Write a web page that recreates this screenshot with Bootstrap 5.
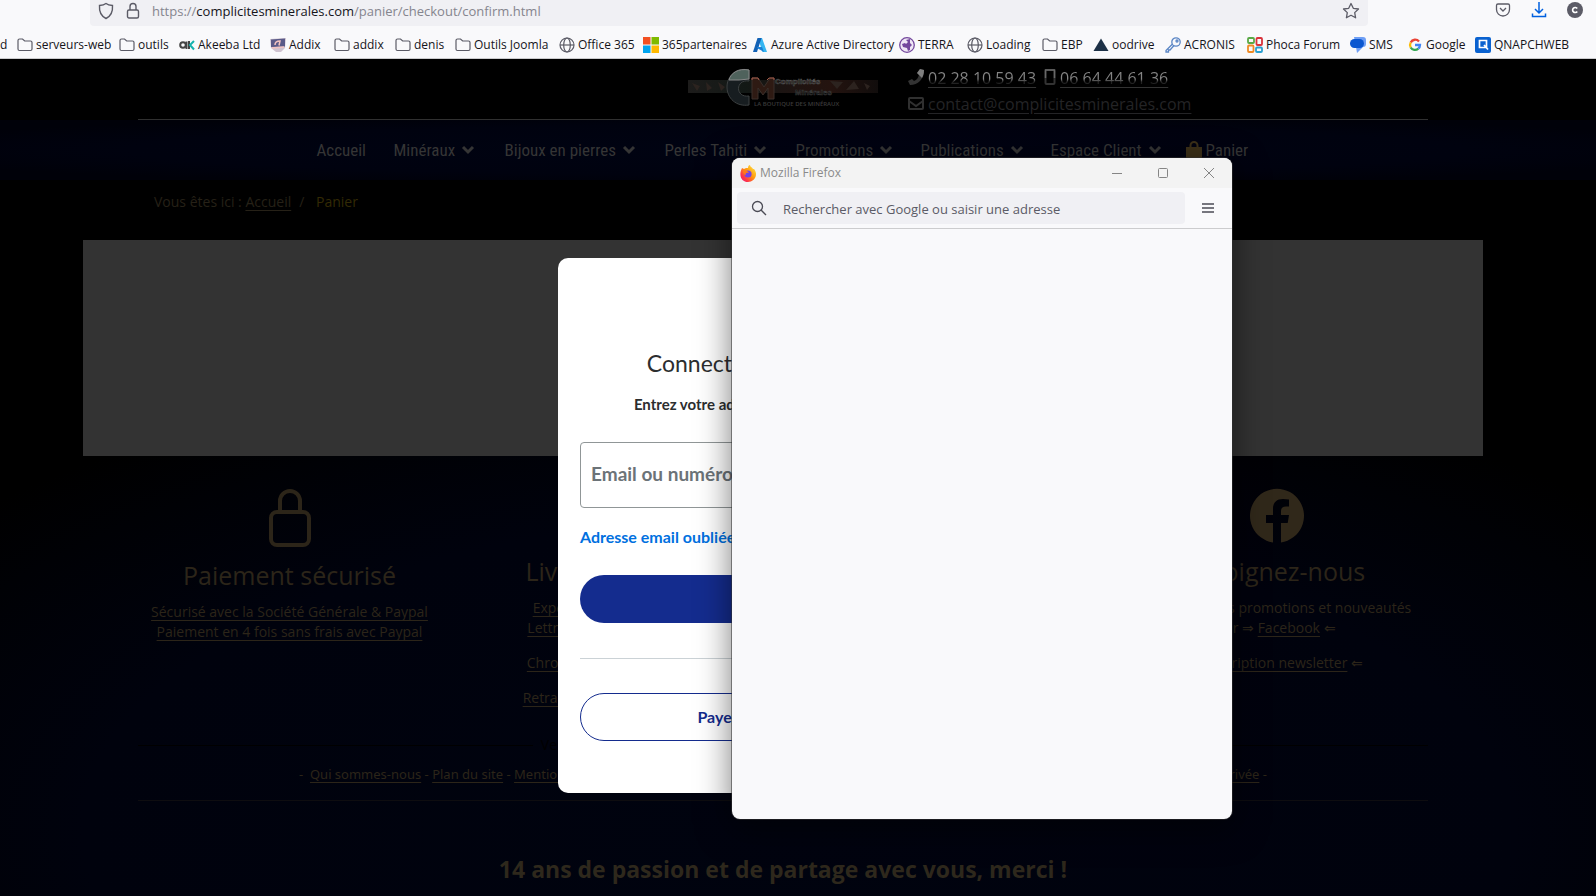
<!DOCTYPE html>
<html lang="fr">
<head>
<meta charset="utf-8">
<meta name="viewport" content="width=device-width, initial-scale=1">
<title>Complicités Minérales - Panier</title>
<link rel="stylesheet" href="https://cdn.jsdelivr.net/npm/bootstrap@5.3.0/dist/css/bootstrap.min.css">
<style>
  :root { --ink: #2c2519; --grey: #303030; }
  body { background: #000; color: var(--ink); font: 14px/20px "Open Sans", "Noto Sans", sans-serif; min-height: 100vh; overflow-x: hidden; }
  svg { flex: none; display: block; }
  button { padding: 0; border: 0; background: none; color: inherit; }

  /* browser chrome */
  .chrome { background: #f9f9fb; border-bottom: 1px solid #ccccce; height: 59px; color: #15141a; overflow: hidden; }
  .address-row { height: 26px; padding-left: 90px; padding-right: 13px; }
  .address { background: #f0f0f4; border-radius: 0 0 4px 4px; height: 26px; max-width: 1278px; padding: 0 8px; color: #5b5b66; }
  .url { color: #85858e; font-size: 13px; line-height: 20px; }
  .url b { color: #15141a; font-weight: 400; }
  .tools { gap: 20px; padding-bottom: 6px; color: #5b5b66; }
  .bookmarks { display: grid; height: 32px; padding-top: 5px; grid-template-columns: 17px 102px 60px 91px 64px 61px 60px 104px 84px 109px 147px 68px 75px 51px 72px 82px 103px 57px 68px 100px; font-size: 12px; line-height: 16px; align-items: center; }
  .bookmarks a { display: flex; align-items: center; gap: 3px; color: #15141a; text-decoration: none; white-space: nowrap; }
  .bookmarks svg { width: 16px; height: 16px; }

  /* shop page */
  .site { background: radial-gradient(ellipse 1100px 480px at 50% 92%, #00030f 0, #00020d 65%, #000105 88%, #000 100%); position: relative; padding-right: 30px; min-height: 837px; }
  .site a { color: inherit; text-underline-offset: 3px; }
  .wrap { max-width: 1290px; margin: 0 auto; }
  .masthead { height: 61px; border-bottom: 1px solid var(--grey); background: #000; }
  .masthead-bg { background: #000; margin-right: -30px; padding-right: 30px; }
  .logo { margin-left: 550px; padding-top: 9px; width: 220px; }
  .contact { color: #242426; padding-top: 9px; font-size: 16px; line-height: 22px; }
  .contact > div { height: 24px; gap: 4px; }
  .lit { background: linear-gradient(#858585 0 11px, #222 14px); -webkit-background-clip: text; background-clip: text; color: transparent !important; text-decoration-color: #333; }
  .menu { height: 60px; margin-right: -30px; padding-right: 30px; background: radial-gradient(ellipse 60% 60% at 50% 50%, #000312 0, #00020f 70%, #000109 100%); color: #353535; }
  .menu-grid { display: grid; width: 933px; margin: 0 auto; grid-template-columns: 77px 111px 160px 131px 125px 130px 135px 64px; font: 17px/24px "Roboto Condensed", "Liberation Sans Narrow", sans-serif; }
  .menu-grid a { display: flex; align-items: center; gap: 6px; text-decoration: none; white-space: nowrap; }
  .crumb-band { background: #000; margin-right: -30px; padding: 11px 30px 28px 0; }
  .crumbs { padding-left: 16px; font-size: 14px; line-height: 21px; color: #262117; }
  .crumbs .here { color: #332a04; }
  .panel-box { background: #333; height: 216px; max-width: 1400px; margin: 0 auto; }
  .sides { background: #000; margin-right: -30px; padding-right: 30px; }
  .services { max-width: 1316px; margin: 0 auto; padding-top: 32px; height: 273px; text-align: center; white-space: nowrap; line-height: 20px; }
  .services h2 { font-size: 25px; line-height: 30px; margin: 12px 0; font-weight: 400; }
  .services p { margin: 0 0 15px; }
  .seller { color: #000; height: 32px; gap: 8px; }
  .seller span.rule { height: 1px; background: #000; flex: 1; }
  .footlinks { max-width: 968px; margin: 0 auto; padding: 3px 0 16px; white-space: nowrap; font: 13px/20px "Noto Sans", sans-serif; }
  .endrule { border-top: 1px solid #0e0d10; }
  .slogan { font-size: 23px; line-height: 32px; font-weight: 700; text-align: center; padding-top: 52px; margin: 0; color: #2e281c; }

  /* login dialog and the browser window above it */
  .login { position: absolute; left: calc(50% - 240px); top: 199px; width: 450px; height: 535px; background: #fff; border-radius: 10px; padding: 90px 22px 0; color: #2c2e2f; font-family: Lato, sans-serif; text-align: center; white-space: nowrap; }
  .login h1 { font-size: 23px; line-height: 30px; margin: 0 0 15px; font-weight: 400; }
  .login p { font-size: 15px; line-height: 22px; margin: 0 0 27px; font-weight: 700; }
  .login input { width: 100%; height: 66px; border: 1px solid #909697; border-radius: 4px; padding: 0 10px 4px; font-size: 19px; font-weight: 700; }
  .login input::placeholder { color: #6c7378; opacity: 1; }
  .login .forgot { display: block; text-align: left; font-size: 16px; line-height: 22px; margin: 18px 0 27px; font-weight: 700; color: #0070e0; text-decoration: none; }
  .pill { display: block; width: 100%; height: 48px; border-radius: 24px; font-weight: 700; font-size: 16px; }
  .pill-full { background: #142c8e; color: #fff; }
  .pill-line { border: 1px solid #142c8e; color: #142c8e; }
  .login hr { margin: 35px 0 34px; opacity: 1; border-color: #cbd2d6; }
  .popup { position: absolute; left: calc(50% - 66px); top: 99px; width: 500px; height: 661px; background: #f9f9fb; border-radius: 8px; box-shadow: 0 0 0 1px #3338, 0 8px 34px #0008; overflow: hidden; color: #8a8a8a; }
  .popup-title { background: #f3f3f3; height: 30px; padding: 0 17px 0 8px; font-size: 12px; }
  .popup-title .btns { gap: 34px; }
  .popup-bar { height: 41px; border-bottom: 1px solid #ccccce; padding: 0 17px 0 5px; color: #4b4b55; }
  .popup-search { background: #f0f0f4; border-radius: 4px; width: 448px; height: 32px; padding: 0 14px; gap: 16px; }
  .popup-search input { flex: 1; border: 0; background: none; font-size: 13px; padding: 2px 0 0; outline: 0; }
  .popup-search input::placeholder { color: #5b5b66; opacity: 1; }
</style>
<script src="https://cdn.jsdelivr.net/npm/bootstrap@5.3.0/dist/js/bootstrap.bundle.min.js"></script>
</head>
<body>
<svg width="0" height="0" class="position-absolute" aria-hidden="true">
  <symbol id="folder" viewBox="0 0 16 16"><path d="M2.5 2h3l2.200 2h5.800a1.500 1.500 0 0 1 1.500 1.500V12a1.500 1.500 0 0 1-1.500 1.500h-11A1.500 1.500 0 0 1 1 12V3.500A1.500 1.500 0 0 1 2.500 2z" fill="none" stroke="#5b5b66" stroke-width="1.200"/></symbol>
  <symbol id="globe" viewBox="0 0 16 16"><g fill="none" stroke="#5b5b66" stroke-width="1.200"><circle cx="8" cy="8" r="7"/><ellipse cx="8" cy="8" rx="3.300" ry="7"/><path d="M1 8h14"/></g></symbol>
  <symbol id="chev" viewBox="0 0 14 10"><path d="M2 2l5 5 5-5" fill="none" stroke="currentColor" stroke-width="3"/></symbol>
</svg>

<header class="chrome">
  <div class="address-row d-flex justify-content-between">
    <div class="address d-flex align-items-center flex-grow-1 pb-1">
      <svg width="16" height="18" viewBox="0 0 16 18" fill="none" stroke="currentColor" stroke-width="1.400"><path d="M8 1.500C6 3 4 3.300 1.500 3.500 1 10 3 14 8 16.500 13 14 15 10 14.500 3.500 12 3.300 10 3 8 1.500z"/></svg>
      <svg class="ms-2 me-2" width="22" height="18" viewBox="-4 0 22 18" fill="none" stroke="currentColor" stroke-width="1.400"><rect x="1.500" y="8" width="11" height="8" rx="1.500"/><path d="M4 8V4.500a3 3 0 0 1 6 0V8"/></svg>
      <div class="url flex-grow-1">https://<b>complicitesminerales.com</b>/panier/checkout/confirm.html</div>
      <button aria-label="Marquer cette page"><svg width="18" height="18" viewBox="0 0 18 18" fill="none" stroke="currentColor" stroke-width="1.300" stroke-linejoin="round"><path d="M9 1.500l2.300 4.800 5.200.7-3.800 3.600.9 5.200L9 13.300l-4.600 2.500.9-5.200L1.500 7l5.200-.7z"/></svg></button>
    </div>
    <div class="tools d-flex align-items-center">
      <button aria-label="Pocket"><svg width="16" height="16" viewBox="0 0 16 16" fill="none" stroke="currentColor" stroke-width="1.300"><path d="M3 2h10a1.500 1.500 0 0 1 1.500 1.500V7.500a6.500 6.500 0 0 1-13 0v-4A1.500 1.500 0 0 1 3 2zM5 6l3 3 3-3"/></svg></button>
      <button aria-label="Téléchargements"><svg width="16" height="16" viewBox="0 0 16 16" fill="none" stroke="#0060df" stroke-width="1.500"><path d="M8 0v10.500M4 7l4 4 4-4M1.500 11.500v3h13v-3"/></svg></button>
      <button aria-label="Compte"><svg width="16" height="16" viewBox="0 0 16 16"><circle cx="8" cy="8" r="8" fill="#5b5b66"/><path d="M10.200 6.600a2.500 2.500 0 1 0 0 2.800" fill="none" stroke="#fff" stroke-width="1.700"/></svg></button>
    </div>
  </div>
  <nav class="bookmarks">
    <a href="#">d</a>
    <a href="#"><svg><use href="#folder"/></svg>serveurs-web</a>
    <a href="#"><svg><use href="#folder"/></svg>outils</a>
    <a href="#"><svg viewBox="0 0 16 16" fill="none" stroke-width="2"><circle cx="4" cy="8" r="2.800" stroke="#444"/><path d="M7.500 4.500v7.500" stroke="#444"/><path d="M10 4v8" stroke="#444"/><path d="M15 4l-4 4 4 4.500" stroke="#16b2ae"/></svg>Akeeba Ltd</a>
    <a href="#"><svg viewBox="0 0 16 16"><path d="M0 2l16-1-1 10-4 4H6l-5-4z" fill="#cfc3d0"/><path d="M1 2.500l14-1v8L1 10z" fill="#5a5a88"/><path d="M5 8c0-4 3-4 5-4L9 8.500M2 11l12-1" stroke="#f3c3c0" stroke-width="1.500" fill="none"/></svg>Addix</a>
    <a href="#"><svg><use href="#folder"/></svg>addix</a>
    <a href="#"><svg><use href="#folder"/></svg>denis</a>
    <a href="#"><svg><use href="#folder"/></svg>Outils Joomla</a>
    <a href="#"><svg><use href="#globe"/></svg>Office 365</a>
    <a href="#"><svg viewBox="0 0 16 16"><path d="M0 0h7.500v7.500H0z" fill="#f25022"/><path d="M8.500 0H16v7.500H8.500z" fill="#7fba00"/><path d="M0 8.500h7.500V16H0z" fill="#00a4ef"/><path d="M8.500 8.500H16V16H8.500z" fill="#ffb900"/></svg>365partenaires</a>
    <a href="#"><svg viewBox="0 0 16 16"><path d="M6 1h4l5 14h-4.500z" fill="#35b5f1"/><path d="M5.500 1h4L5 15H1z" fill="#1261b5"/><path d="M5 10h5l2 5-7-4z" fill="#1a80d6"/></svg>Azure Active Directory</a>
    <a href="#"><svg viewBox="0 0 16 16"><circle cx="8" cy="8" r="7.300" fill="#efe6f5" stroke="#74489d" stroke-width="1.300"/><path d="M7 3l4-1v4l2 2-2 2v3l-2 1-1-3-4-1-1-3 3-1 1 1 2-2z" fill="#74489d"/></svg>TERRA</a>
    <a href="#"><svg><use href="#globe"/></svg>Loading</a>
    <a href="#"><svg><use href="#folder"/></svg>EBP</a>
    <a href="#"><svg viewBox="0 0 16 16"><path d="M8 1.500L15.500 14H.5z" fill="#1c3046"/></svg>oodrive</a>
    <a href="#"><svg viewBox="0 0 16 16" fill="none" stroke="#5b86c5" stroke-width="1.300"><circle cx="11" cy="5" r="4.200"/><circle cx="12" cy="4" r="1"/><path d="M7.500 7L1 13.500V15h2.500v-2H5l4-4.500"/></svg>ACRONIS</a>
    <a href="#"><svg viewBox="0 0 16 16" fill="none" stroke-width="1.800"><rect x="1" y="1" width="6" height="5" rx="1" stroke="#59a845"/><rect x="9.500" y="1" width="5.500" height="7" rx="1" stroke="#d9323b"/><rect x="1" y="8.500" width="5.500" height="6.500" rx="1" stroke="#ef8a24"/><rect x="9" y="10.500" width="6" height="4.500" rx="1" stroke="#2a9fd0"/></svg>Phoca Forum</a>
    <a href="#"><svg viewBox="0 0 16 16"><path d="M4 0h9a3 3 0 0 1 3 3v4a3 3 0 0 1-3 3L7 16l-1-6z" fill="#6f9ff5"/><rect x="0" y="2" width="14" height="9" rx="4.500" fill="#0b57d0"/></svg>SMS</a>
    <a href="#"><svg viewBox="0 0 16 16" fill="none" stroke-width="2.300"><path d="M12 4.500A5 5 0 0 0 3.700 5.500" stroke="#ea4335"/><path d="M3.700 5.500a5 5 0 0 0 0 5" stroke="#fbbc05"/><path d="M3.700 10.500a5 5 0 0 0 7.600 1.200" stroke="#34a853"/><path d="M11.300 11.700A5 5 0 0 0 13 8H8" stroke="#4285f4"/></svg>Google</a>
    <a href="#"><svg viewBox="0 0 16 16"><rect width="16" height="16" rx="2" fill="#0a62d0"/><path d="M4.500 3.500h7v7h-7zM9 8l4 4.500" fill="none" stroke="#fff" stroke-width="1.700"/></svg>QNAPCHWEB</a>
  </nav>
</header>

<main class="site">
  <div class="masthead-bg">
  <div class="wrap masthead d-flex">
    <div class="logo"><svg width="192" height="40" viewBox="0 0 192 40">
      <defs><linearGradient id="strip"><stop offset="0" stop-color="#1d1c1b"/><stop offset=".3" stop-color="#121815"/><stop offset=".5" stop-color="#1c1412"/><stop offset=".75" stop-color="#24130f"/><stop offset="1" stop-color="#110d0c"/></linearGradient></defs>
      <path d="M0 12h190v13H0z" fill="url(#strip)"/>
      <path d="M4 15l8 3-3 5zM18 14l6 6-5 3zM30 14l7 5-4 4zM142 13l7 8 6-7zM158 22l8-9 5 8zM176 15l6 3-3 4z" fill="#2c231f"/>
      <path d="M61 2C48-1 39 8 39 19s9 20 22 18v-9c-14 2-14-17 0-15z" fill="#171d20" stroke="#3c4041"/>
      <path d="M61 2C50 0 43 5 41 12h10l10-1z" fill="#4f625c" stroke="#888"/>
      <path d="M64 31V10h6l6 9 6-9h4v21h-6V20l-5 7-5-7v11z" fill="#2e1a13" stroke="#3a2f2a"/>
      <path d="M64 12v-2h6l1 2M79 12l2-2h5v2" stroke="#a45b49" fill="none"/>
      <text x="87" y="16" font-family="Liberation Sans" font-weight="700" font-size="8" fill="#111" stroke="#555" stroke-width=".5">Complicités</text>
      <text x="107" y="27" font-family="Liberation Sans" font-weight="700" font-size="8" fill="#090909" stroke="#3a3a3a" stroke-width=".5">Minérales</text>
      <text x="66" y="38" font-family="Open Sans" font-weight="600" font-size="6" fill="#3a3a3a">LA BOUTIQUE DES MINÉRAUX</text>
    </svg></div>
    <div class="contact">
      <div class="d-flex align-items-start">
        <svg width="16" height="18" viewBox="0 0 16 18"><path d="M12 1l4 1c0 9-6 15-14 15l-2-4 4-2 2 2c3-1 4-3 5-6l-2-2z" fill="#333"/><path d="M12 1l4 1c0 4-1 6-2 8l-3-3-2-2z" fill="#808080"/></svg>
        <a class="lit lh-sm" href="#">02 28 10 59 43</a>
        <svg class="ms-1" width="12" height="18" viewBox="0 0 12 18"><rect x="1.500" y="2" width="9" height="14" rx="1" fill="none" stroke="#333" stroke-width="2"/><path d="M1.500 10V2h9v8" fill="none" stroke="#686868" stroke-width="1.500"/></svg>
        <a class="lit lh-sm" href="#">06 64 44 61 36</a>
      </div>
      <div class="d-flex align-items-center">
        <svg width="16" height="14" viewBox="0 0 16 14" fill="none" stroke="#303030" stroke-width="2"><rect x="1" y="1" width="14" height="11" rx="1"/><path d="M1 4l7 5 7-5"/></svg>
        <a href="#">contact@complicitesminerales.com</a>
      </div>
    </div>
  </div>
  </div>

  <div class="menu d-flex align-items-center">
    <nav class="menu-grid">
      <a href="#">Accueil</a>
      <a href="#">Minéraux <svg width="14" height="10"><use href="#chev"/></svg></a>
      <a href="#">Bijoux en pierres <svg width="14" height="10"><use href="#chev"/></svg></a>
      <a href="#">Perles Tahiti <svg width="14" height="10"><use href="#chev"/></svg></a>
      <a href="#">Promotions <svg width="14" height="10"><use href="#chev"/></svg></a>
      <a href="#">Publications <svg width="14" height="10"><use href="#chev"/></svg></a>
      <a href="#">Espace Client <svg width="14" height="10"><use href="#chev"/></svg></a>
      <a href="#" class="gap-1"><svg width="16" height="18" viewBox="0 0 16 18"><path d="M0 6h16v10a2 2 0 0 1-2 2H2a2 2 0 0 1-2-2z" fill="#3c3018"/><path d="M4.500 8V4.500a3.500 3.500 0 0 1 7 0V8" fill="none" stroke="#3c3018" stroke-width="2"/></svg>Panier</a>
    </nav>
  </div>

  <div class="crumb-band"><div class="wrap"><div class="crumbs">Vous êtes ici : <a href="#">Accueil</a><span class="mx-1 px-1">/</span> <span class="here">Panier</span></div></div></div>
  <div class="sides"><div class="panel-box"></div></div>

  <section class="services row g-0">
    <div class="col">
      <svg class="mx-auto" width="44" height="60" viewBox="0 0 44 60" fill="none" stroke="#2c2519" stroke-width="4"><rect x="3" y="24" width="38" height="33" rx="6"/><path d="M12 24V13a10 10 0 0 1 20 0v11"/></svg>
      <h2>Paiement sécurisé</h2>
      <p><a href="#">Sécurisé avec la Société Générale &amp; Paypal</a><br><a href="#">Paiement en 4 fois sans frais avec Paypal</a></p>
    </div>
    <div class="col">
      <svg class="mx-auto" width="54" height="56" viewBox="0 0 54 56"><path d="M2 14h30v26H2zM34 22h10l8 9v9H34z" fill="#2c2519"/></svg>
      <h2>Livraison rapide</h2>
      <p><a href="#">Expédition sous 24 heures</a><br><a href="#">Lettre suivie, Colissimo suivi</a></p>
      <p><a href="#">Chronopost, sous 24 heures</a></p>
      <p><a href="#">Retrait en boutique sans frais</a></p>
    </div>
    <div class="col"></div>
    <div class="col">
      <svg class="mx-auto" width="54" height="56" viewBox="0 0 54 56"><path d="M23 54.500V35h-7v-8h7v-6c0-7 4-10 10-10l6 .5v7h-3c-4 0-5 2-5 5v3.500h8l-1.300 8H31v19.500A27 27 0 1 0 23 54.500z" fill="#30281a"/></svg>
      <h2>Rejoignez-nous</h2>
      <p>Retrouvez nos promotions et nouveautés<br>sur ⇒ <a href="#">Facebook</a> ⇐</p>
      <p>⇒ <a href="#">Inscription newsletter</a> ⇐</p>
    </div>
  </section>

  <footer class="wrap">
    <div class="seller d-flex align-items-center"><span class="rule"></span><span>Vente en ligne de minéraux et bijoux en pierres naturelles, perles de Tahiti</span><span class="rule"></span></div>
    <div class="footlinks d-flex justify-content-between">
      <span>-&nbsp; <a href="#">Qui sommes-nous</a> - <a href="#">Plan du site</a> - <a href="#">Mentions légales</a></span>
      <span><a href="#">Vie privée</a> -</span>
    </div>
    <div class="endrule"></div>
    <h3 class="slogan">14 ans de passion et de partage avec vous, merci !</h3>
  </footer>

  <section class="login">
    <h1>Connectez-vous sur PayPal</h1>
    <p><label for="mail">Entrez votre adresse email pour commencer :</label></p>
    <input id="mail" type="text" placeholder="Email ou numéro de mobile">
    <a class="forgot" href="#">Adresse email oubliée ?</a>
    <button class="pill pill-full">Suivant</button>
    <hr>
    <button class="pill pill-line">Payer par carte bancaire</button>
  </section>

  <section class="popup">
    <div class="popup-title d-flex align-items-center">
      <svg width="16" height="17" viewBox="0 0 16 17"><defs><linearGradient id="fx" x1="1" y1="0" x2="0" y2="1"><stop offset="0" stop-color="#fff44f"/><stop offset=".45" stop-color="#ff980e"/><stop offset=".75" stop-color="#ff3647"/><stop offset="1" stop-color="#e31587"/></linearGradient></defs><path d="M2 3l2 1 2-1 2 0c0-2 1-3 2-3 0 2 2 2 3 4l1 0c5 6 0 13-6 13S-2 11 2 3z" fill="url(#fx)"/><circle cx="8" cy="9" r="3.600" fill="#7542e5"/><path d="M3 6c3-1 5 0 6 2-3-1-4 1-3 2-2 0-3-2-3-4z" fill="#ff7a1a"/></svg>
      <span class="ms-1 flex-grow-1">Mozilla Firefox</span>
      <div class="btns d-flex align-items-center">
        <button aria-label="Réduire"><svg width="12" height="12"><path d="M1 6.500h10" stroke="#858585"/></svg></button>
        <button aria-label="Agrandir"><svg width="12" height="12"><rect x="1.500" y="1.500" width="9" height="9" rx="1" fill="none" stroke="#858585"/></svg></button>
        <button aria-label="Fermer"><svg width="12" height="12"><path d="M1 1l10 10M11 1L1 11" stroke="#858585"/></svg></button>
      </div>
    </div>
    <div class="popup-bar d-flex align-items-center justify-content-between">
      <div class="popup-search d-flex align-items-center">
        <svg width="16" height="16" viewBox="0 0 16 16" fill="none" stroke="currentColor" stroke-width="1.300"><circle cx="6.500" cy="6.500" r="5"/><path d="M10 10l5 5"/></svg>
        <input type="text" aria-label="Recherche" placeholder="Rechercher avec Google ou saisir une adresse">
      </div>
      <button aria-label="Menu"><svg width="14" height="12" stroke="currentColor" stroke-width="1.300"><path d="M1 2h12M1 6h12M1 10h12"/></svg></button>
    </div>
  </section>
</main>
</body>
</html>
